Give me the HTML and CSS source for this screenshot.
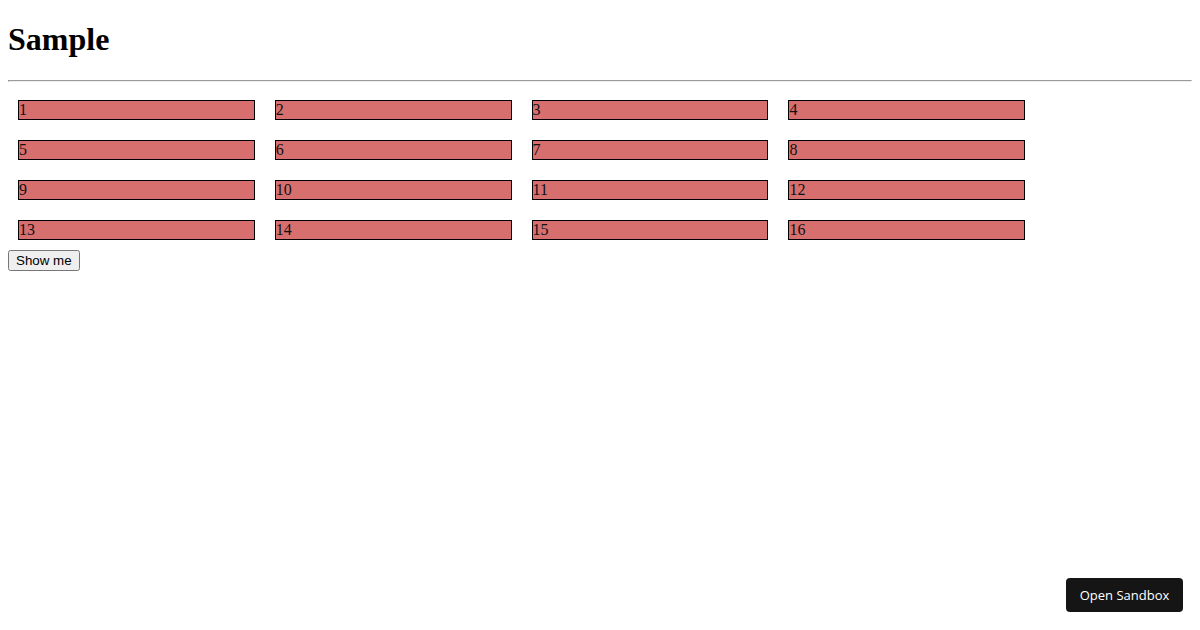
FILE: index.html
```html
<!DOCTYPE html>
<html>
<head>
<meta charset="utf-8">
<link rel="stylesheet" href="styles.css">
</head>
<body>
<h1 class="title">Sample</h1>
<hr class="rule">
<div class="grid">
  <div class="box">1</div><div class="box">2</div><div class="box">3</div><div class="box">4</div>
  <div class="box">5</div><div class="box">6</div><div class="box">7</div><div class="box">8</div>
  <div class="box">9</div><div class="box">10</div><div class="box">11</div><div class="box">12</div>
  <div class="box">13</div><div class="box">14</div><div class="box">15</div><div class="box">16</div>
</div>
<button class="show">Show me</button>
<a class="sandbox">Open Sandbox</a>
</body>
</html>
```
FILE: styles.css
```css
body {
  margin: 0 8px 8px;
  font-family: "Liberation Serif", serif;
}
.title {
  font-size: 32px;
  margin: 21.44px 0;
}
.rule {
  margin: 8px 0;
  border-color: #9a9a9a #eee #eee #9a9a9a;
  border-style: solid;
  border-width: 1px;
  height: 0;
}
.grid {
  display: flex;
  flex-wrap: wrap;
}
.box {
  box-sizing: border-box;
  width: 20%;
  height: 20px;
  margin: 10px;
  background: #d76f6f;
  border: 1px solid #000;
  font-size: 16px;
  line-height: 18px;
  color: #111;
}
.grid::after {
  content: "";
  width: 100%;
}
.show {
  font-family: "Liberation Sans", Arial, sans-serif;
  font-size: 13.33px;
  display: block;
  margin: 0;
}
.sandbox {
  position: fixed;
  right: 17px;
  bottom: 18px;
  background: #151515;
  color: #fff;
  font-family: "Open Sans", sans-serif;
  font-size: 13px;
  font-weight: 500;
  border-radius: 4px;
  height: 34px;
  line-height: 34px;
  box-sizing: border-box;
  width: 117px;
  text-align: center;
}
```
